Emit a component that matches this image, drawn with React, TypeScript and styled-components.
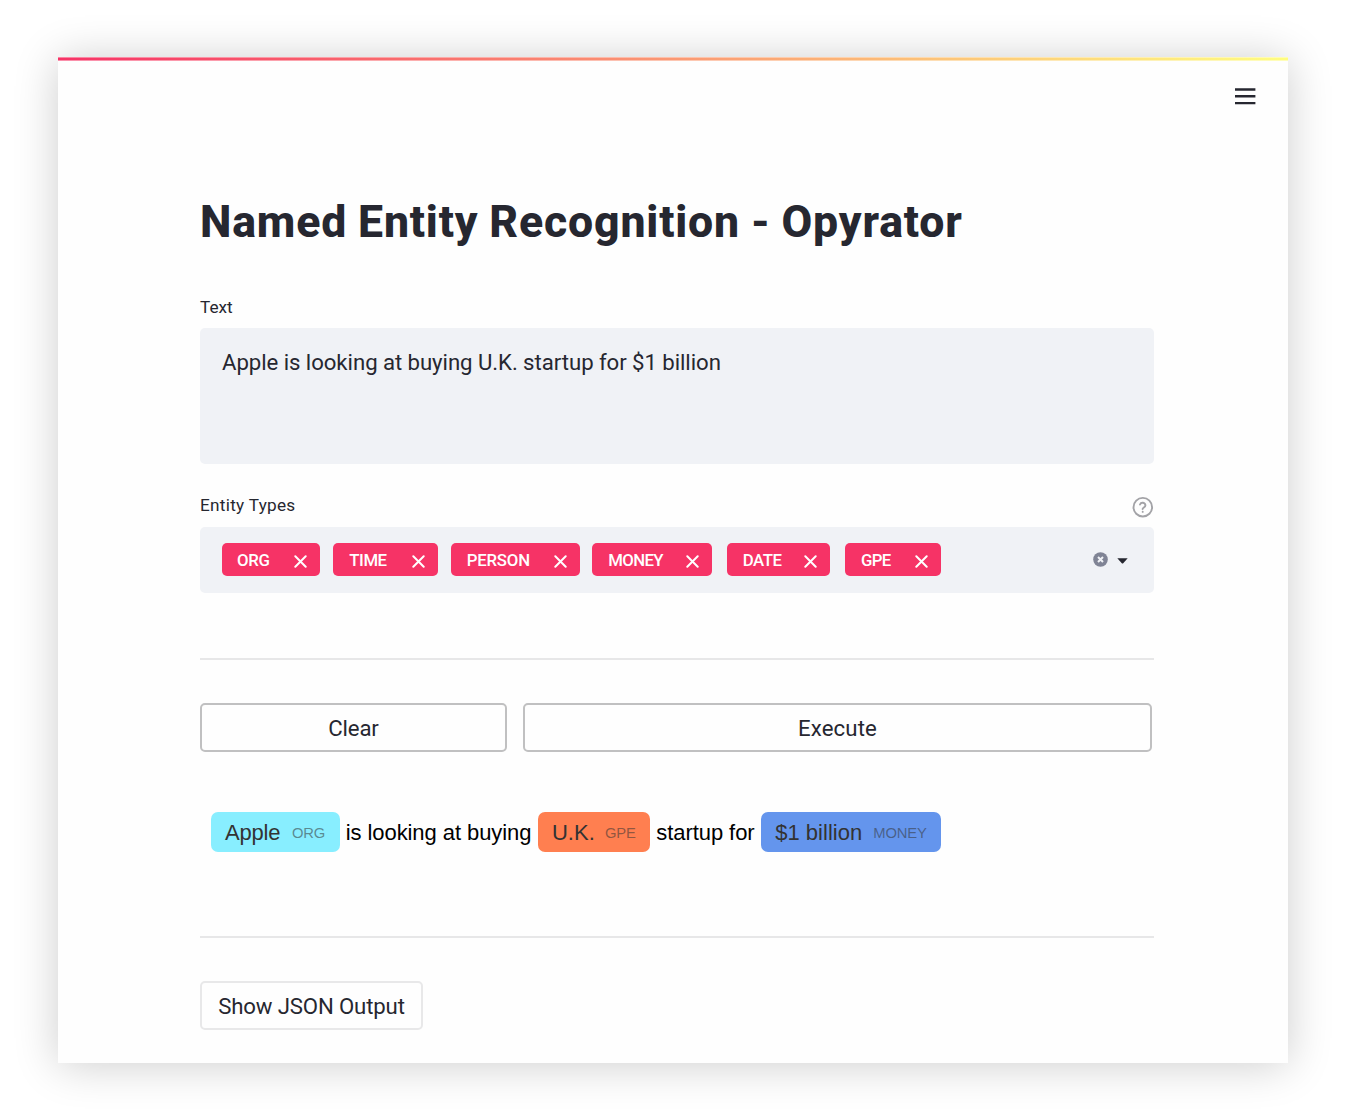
import React from 'react';
import styled, { createGlobalStyle } from 'styled-components';

const GlobalStyle = createGlobalStyle`
  *, *::before, *::after { box-sizing: border-box; }
  body { margin: 0; background: #fff; color: #262730; font-family: Roboto, sans-serif; }
`;

const Page = styled.div`
  display: flex;
  justify-content: center;
  height: 1120px;
  padding: 57px 57px 57px 58px;
  overflow: hidden;
`;

const Window = styled.main`
  display: flex;
  flex-direction: column;
  width: 1230px;
  height: 1006px;
  background: #fefefe;
  box-shadow: 0 2px 42px rgba(0, 0, 0, 0.2);
`;

const Decoration = styled.div`
  height: 4px;
  flex: none;
  background: linear-gradient(90deg, #f63366, #fffd80);
  mask-image: linear-gradient(rgba(0, 0, 0, 0.6) 1px, #000 1px 3px, rgba(0, 0, 0, 0.55) 3px);
`;

const Toolbar = styled.header`
  display: flex;
  justify-content: flex-end;
  height: 44px;
  padding: 27px 32px 0 0;
`;

const Content = styled.div`
  display: flex;
  flex-direction: column;
  width: 953.5px;
  margin-left: 142px;
  padding-top: 87px;
`;

const Title = styled.h1`
  margin: 0 0 43px;
  font-size: 44.6px;
  font-weight: 800;
  line-height: 60px;
  letter-spacing: 0.83px;
  word-spacing: -1px;
  white-space: nowrap;
`;

const LabelRow = styled.div`
  display: flex;
  justify-content: space-between;
  height: 24px;
`;

const Label = styled.label<{ $tracking?: number }>`
  font-size: 17.2px;
  line-height: 24px;
  letter-spacing: ${(p) => p.$tracking ?? 0}px;
`;

const TextArea = styled.div`
  height: 136px;
  margin: 9px 0 29px;
  padding: 17px 22px;
  border-radius: 5px;
  background: #f0f2f6;
  font-size: 22.2px;
  line-height: 34px;
  letter-spacing: -0.045px;
  word-spacing: -0.1px;
`;

const MultiSelect = styled.div`
  display: flex;
  align-items: center;
  height: 66px;
  margin: 10px 0 65px;
  padding: 0 26px 1px 21.5px;
  border-radius: 5px;
  background: #f0f2f6;
`;

const Tag = styled.span<{ $width: number; $gap: number; $tracking: number; $inset: number }>`
  display: flex;
  align-items: center;
  justify-content: space-between;
  width: ${(p) => p.$width}px;
  height: 33px;
  margin-right: ${(p) => p.$gap}px;
  padding: 1px 13px 0 ${(p) => p.$inset}px;
  border-radius: 5px;
  background: #f63366;
  color: #fff;
  font-size: 16.8px;
  font-weight: 500;
  line-height: 32px;
  letter-spacing: ${(p) => p.$tracking}px;

  svg { margin-top: 2px; }
`;

const SelectControls = styled.div`
  display: flex;
  align-items: center;
  gap: 9px;
  margin-left: auto;

  svg + svg { margin-top: 2px; }
`;

const Divider = styled.hr`
  width: 100%;
  height: 2px;
  margin: 0;
  border: 0;
  background: #e7e7e8;
`;

const ButtonRow = styled.div`
  display: grid;
  grid-template-columns: 307px 629px;
  gap: 16px;
  margin: 43px 0 60px;
`;

const Button = styled.button<{ $subtle?: boolean; $tracking?: number }>`
  height: 49px;
  padding: 2px 0 0;
  border: ${(p) => (p.$subtle ? '2px solid #e8e8e9' : '2px solid #c0c0c1')};
  border-radius: 5px;
  background: #fefefe;
  color: #262730;
  font: 400 22.2px / 43px Roboto, sans-serif;
  letter-spacing: ${(p) => p.$tracking ?? 0}px;
  white-space: nowrap;
`;

const OutputButton = styled(Button)`
  width: 223px;
  margin-top: 43px;
`;

const Annotated = styled.div`
  display: flex;
  align-items: center;
  height: 40px;
  margin: 0 0 84px 11px;
  color: #000;
  font: 400 22px / 38px 'Liberation Sans', Arial, sans-serif;
  white-space: pre;
`;

const Plain = styled.span<{ $width: number }>`
  width: ${(p) => p.$width}px;
  padding: 2px 0 0 6px;
  letter-spacing: -0.07px;
`;

const Mark = styled.mark<{ $color: string; $width: number; $tracking?: number }>`
  display: flex;
  align-items: center;
  justify-content: space-between;
  width: ${(p) => p.$width}px;
  height: 40px;
  padding: 2px 14.5px 0 14px;
  border-radius: 7px;
  background: ${(p) => p.$color};
  color: #333;
  letter-spacing: ${(p) => p.$tracking ?? 0}px;
`;

const EntityName = styled.span`
  color: rgba(51, 51, 51, 0.55);
  font-size: 14.8px;
  letter-spacing: -0.15px;
`;

const MenuIcon = () => (
  <svg width="21" height="17" viewBox="0 0 21 17" fill="#262730">
    <path d="M0 .3h20.4v2.4H0zM0 7.1h20.4v2.4H0zM0 13.9h20.4v2.4H0z" />
  </svg>
);

const RemoveIcon = () => (
  <svg width="13" height="13" viewBox="0 0 13 13" stroke="#fff" strokeWidth="2" strokeLinecap="round">
    <path d="M1.3 1.3l10.4 10.4M11.7 1.3L1.3 11.7" />
  </svg>
);

const HelpIcon = () => (
  <svg width="22" height="22" viewBox="0 0 22 22" fill="none" stroke="#a3a3a7" strokeWidth="1.9" strokeLinecap="round" strokeLinejoin="round">
    <circle cx="10.8" cy="11.2" r="9.3" />
    <path d="M8 8.5a2.8 2.8 0 0 1 5.4.9c0 1.9-2.8 2.2-2.8 3.6M10.7 15.8v.1" />
  </svg>
);

const HelpSlot = styled.span`
  display: flex;
  align-items: flex-end;
  height: 25px;
`;

const ClearIcon = () => (
  <svg width="15" height="15" viewBox="0 0 15 15">
    <circle cx="7.5" cy="7.5" r="7.3" fill="#808495" />
    <path d="M5 5l5 5M10 5l-5 5" stroke="#f0f2f6" strokeWidth="2" />
  </svg>
);

const CaretIcon = () => (
  <svg width="11" height="6" viewBox="0 0 11 6">
    <path d="M.3.3h10.4L6.2 5.3q-.7.6-1.4 0z" fill="#262730" />
  </svg>
);

const tags = [
  { name: 'ORG', width: 98.5, gap: 12.5, tracking: -0.3, inset: 15.5 },
  { name: 'TIME', width: 105.5, gap: 12.5, tracking: -0.45, inset: 16.8 },
  { name: 'PERSON', width: 129.5, gap: 12.3, tracking: -0.2, inset: 16.2 },
  { name: 'MONEY', width: 120, gap: 14.5, tracking: -0.65, inset: 16 },
  { name: 'DATE', width: 103.5, gap: 14.5, tracking: -0.5, inset: 16 },
  { name: 'GPE', width: 96.3, gap: 0, tracking: -0.7, inset: 16.2 },
];

export default function App() {
  return (
    <>
      <GlobalStyle />
      <Page>
        <Window>
          <Decoration />
          <Toolbar><MenuIcon /></Toolbar>
          <Content>
            <Title>Named Entity Recognition - Opyrator</Title>
            <LabelRow><Label>Text</Label></LabelRow>
            <TextArea>Apple is looking at buying U.K. startup for $1 billion</TextArea>
            <LabelRow>
              <Label $tracking={0.28}>Entity Types</Label>
              <HelpSlot><HelpIcon /></HelpSlot>
            </LabelRow>
            <MultiSelect>
              {tags.map((t) => (
                <Tag key={t.name} $width={t.width} $gap={t.gap} $tracking={t.tracking} $inset={t.inset}>
                  {t.name}
                  <RemoveIcon />
                </Tag>
              ))}
              <SelectControls>
                <ClearIcon />
                <CaretIcon />
              </SelectControls>
            </MultiSelect>
            <Divider />
            <ButtonRow>
              <Button $tracking={-0.15}>Clear</Button>
              <Button $tracking={0.15}>Execute</Button>
            </ButtonRow>
            <Annotated>
              <Mark $color="#8ef" $width={128.7} $tracking={-0.2}>Apple<EntityName>ORG</EntityName></Mark>
              <Plain $width={198.3}>is looking at buying</Plain>
              <Mark $color="#ff7f50" $width={112.3}>U.K.<EntityName>GPE</EntityName></Mark>
              <Plain $width={111}>startup for</Plain>
              <Mark $color="#6495ed" $width={180}>$1 billion<EntityName>MONEY</EntityName></Mark>
            </Annotated>
            <Divider />
            <OutputButton $subtle $tracking={-0.15}>Show JSON Output</OutputButton>
          </Content>
        </Window>
      </Page>
    </>
  );
}
